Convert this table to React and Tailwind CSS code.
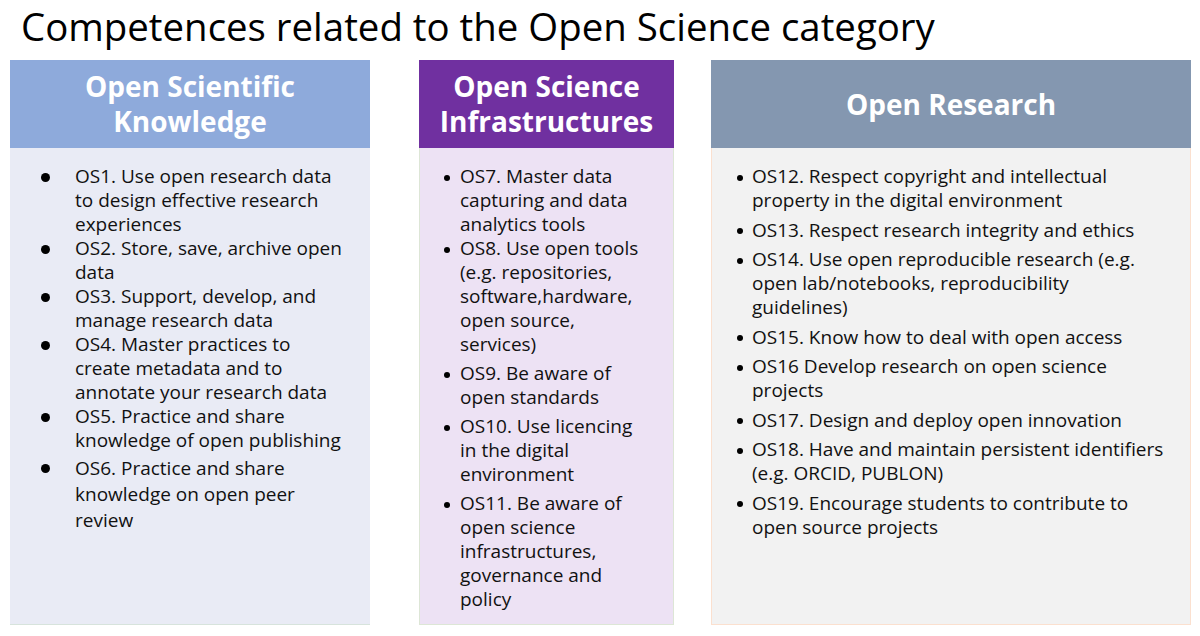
import React from "react";

const font = { fontFamily: "'Open Sans', Lato, sans-serif" };

const p1 = [
  { lines: ["OS1. Use open research data", "to design effective research", "experiences"] },
  { lines: ["OS2. Store, save, archive open", "data"] },
  { lines: ["OS3. Support, develop, and", "manage research data"] },
  { lines: ["OS4. Master practices to", "create metadata and to", "annotate your research data"] },
  { lines: ["OS5. Practice and share", "knowledge of open publishing"] },
  { lines: ["OS6. Practice and share", "knowledge on open peer", "review"], last: true },
];

const p2 = [
  { lines: ["OS7. Master data", "capturing and data", "analytics tools"], gap: false },
  { lines: ["OS8. Use open tools", "(e.g. repositories,", "software,hardware,", "open source,", "services)"], gap: false },
  { lines: ["OS9. Be aware of", "open standards"], gap: true },
  { lines: ["OS10. Use licencing", "in the digital", "environment"], gap: true },
  { lines: ["OS11. Be aware of", "open science", "infrastructures,", "governance and", "policy"], gap: true },
];

const p3 = [
  { lines: ["OS12. Respect copyright and intellectual", "property in the digital environment"], gap: false },
  { lines: ["OS13. Respect research integrity and ethics"], gap: true },
  { lines: ["OS14. Use open reproducible research (e.g.", "open lab/notebooks, reproducibility", "guidelines)"], gap: true },
  { lines: ["OS15. Know how to deal with open access"], gap: true },
  { lines: ["OS16 Develop research on open science", "projects"], gap: true },
  { lines: ["OS17. Design and deploy open innovation"], gap: true },
  { lines: ["OS18. Have and maintain persistent identifiers", "(e.g. ORCID, PUBLON)"], gap: true },
  { lines: ["OS19. Encourage students to contribute to", "open source projects"], gap: true },
];

function Lines({ lines }) {
  return (
    <div>
      {lines.map((l, i) => (
        <div key={i} className="whitespace-nowrap">{l}</div>
      ))}
    </div>
  );
}

export default function App() {
  return (
    <div className="w-[1200px] h-[636px] bg-white overflow-hidden text-[#111111]" style={font}>
      <div className="h-[60px] pl-[21px] text-[38.4px] leading-[52px] text-black whitespace-nowrap">
        Competences related to the Open Science category
      </div>
      <div className="flex">
        {/* Panel 1 */}
        <div className="ml-[10px] w-[360px] h-[565px] flex flex-col">
          <div className="h-[88px] bg-[#8eaadb] flex flex-col items-center justify-center text-white font-bold text-[28px] leading-[35px]">
            <div>Open Scientific</div>
            <div>Knowledge</div>
          </div>
          <div className="flex-1 bg-[#e9ebf5] border-b border-[#d7e3dc] pt-[16px] text-[19px] leading-[24px]">
            {p1.map((it, i) => (
              <div key={i} className={`flex ${it.last ? "mt-[3px] leading-[26px]" : ""}`}>
                <div className="w-[65px] h-[24px] pl-[31px] shrink-0 flex items-center">
                  <div className="w-[9px] h-[9px] rounded-full bg-black mt-[3px]" />
                </div>
                <Lines lines={it.lines} />
              </div>
            ))}
          </div>
        </div>
        {/* Panel 2 */}
        <div className="ml-[49px] w-[255px] h-[565px] flex flex-col">
          <div className="h-[88px] bg-[#7030a0] flex flex-col items-center justify-center text-white font-bold text-[28px] leading-[35px]">
            <div>Open Science</div>
            <div>Infrastructures</div>
          </div>
          <div className="flex-1 bg-[#ede2f4] border border-t-0 border-[#dde6d6] pt-[16px] text-[19px] leading-[24px]">
            {p2.map((it, i) => (
              <div key={i} className={`flex ${it.gap ? "mt-[5px]" : ""}`}>
                <div className="w-[40px] h-[24px] pl-[24px] shrink-0 flex items-center">
                  <div className="w-[6px] h-[6px] rounded-full bg-black mt-[3px]" />
                </div>
                <Lines lines={it.lines} />
              </div>
            ))}
          </div>
        </div>
        {/* Panel 3 */}
        <div className="ml-[37px] w-[480px] h-[565px] flex flex-col">
          <div className="h-[88px] bg-[#8497b0] flex items-center justify-center text-white font-bold text-[28px] leading-[35px]">
            <div>Open Research</div>
          </div>
          <div className="flex-1 bg-[#f2f2f2] border border-t-0 border-[#fbe0cf] pt-[16px] text-[19px] leading-[24px]">
            {p3.map((it, i) => (
              <div key={i} className={`flex ${it.gap ? "mt-[5.5px]" : ""}`}>
                <div className="w-[40px] h-[24px] pl-[25px] shrink-0 flex items-center">
                  <div className="w-[6px] h-[6px] rounded-full bg-black mt-[3px]" />
                </div>
                <Lines lines={it.lines} />
              </div>
            ))}
          </div>
        </div>
      </div>
    </div>
  );
}
